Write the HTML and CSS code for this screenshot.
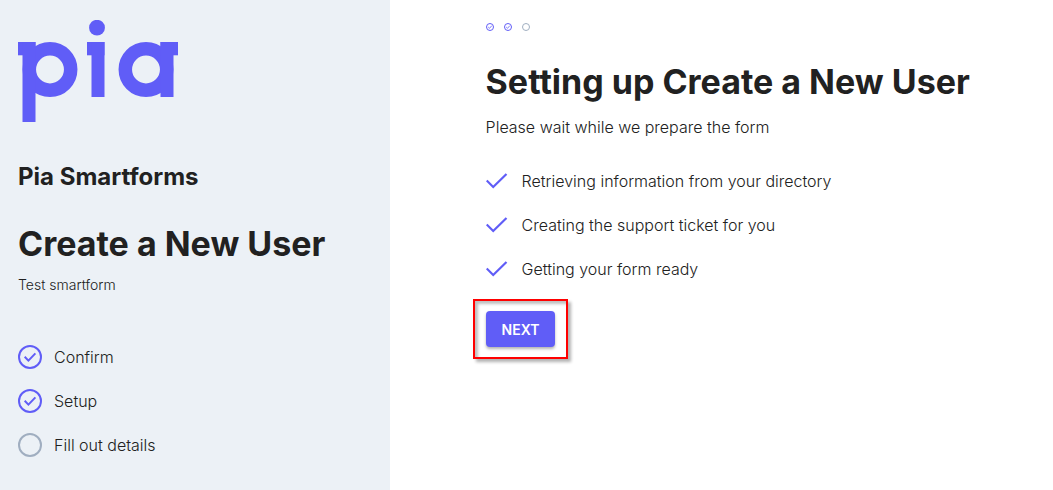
FILE: index.html
```html
<!DOCTYPE html>
<html lang="en">
<head>
    <meta charset="UTF-8">
    <meta name="viewport" content="width=device-width, initial-scale=1.0">
    <title>Pia Smartforms - Create a New User</title>
    <link rel="stylesheet" href="styles.css">
</head>
<body>
    <!-- Shared icons -->
    <svg class="sprite" aria-hidden="true">
        <symbol id="icon-done" viewBox="0 0 24 24">
            <circle cx="12" cy="12" r="11" fill="none" stroke="currentColor" stroke-width="2"/>
            <path d="M6.7 11.8l3.7 3.8 7-7.2" fill="none" stroke="currentColor" stroke-width="2"/>
        </symbol>
        <symbol id="icon-done-small" viewBox="0 0 8 8">
            <circle cx="4" cy="4" r="3.5" fill="none" stroke="currentColor"/>
            <path d="M2.200 4l1.300 1.300 2.300-2.600" fill="none" stroke="currentColor" stroke-width="0.8"/>
        </symbol>
        <symbol id="icon-todo" viewBox="0 0 24 24">
            <circle cx="12" cy="12" r="11" fill="none" stroke="currentColor" stroke-width="2"/>
        </symbol>
        <symbol id="icon-todo-small" viewBox="0 0 8 8">
            <circle cx="4" cy="4" r="3.5" fill="none" stroke="currentColor"/>
        </symbol>
        <symbol id="icon-check" viewBox="0 0 24 24">
            <path d="M.7 11.500l6.500 6.500L20.500 5" fill="none" stroke="currentColor" stroke-width="2.200"/>
        </symbol>
    </svg>

    <div class="layout">
        <aside class="sidebar">
            <svg class="logo" viewBox="0 0 160 102" role="img" aria-label="pia">
                <g fill="none" stroke="currentColor" stroke-width="13.500">
                    <circle cx="32" cy="49.500" r="20.700"/>
                    <circle cx="128" cy="49.500" r="20.700"/>
                </g>
                <g fill="currentColor">
                    <rect x="0" y="22" width="17.500" height="13.300"/>
                    <rect x="4.500" y="22" width="13" height="80"/>
                    <circle cx="79" cy="7.700" r="7.900"/>
                    <rect x="69" y="22" width="17.500" height="13.300"/>
                    <rect x="73.500" y="22" width="13" height="55"/>
                    <rect x="142.500" y="22" width="17.500" height="13.300"/>
                    <rect x="142.500" y="22" width="13" height="55"/>
                </g>
            </svg>
            <h2 class="product">Pia Smartforms</h2>
            <h1 class="title">Create a New User</h1>
            <p class="subtitle">Test smartform</p>
            <ol class="steps">
                <li class="step"><svg class="icon"><use href="#icon-done"/></svg>Confirm</li>
                <li class="step"><svg class="icon"><use href="#icon-done"/></svg>Setup</li>
                <li class="step"><svg class="icon todo"><use href="#icon-todo"/></svg>Fill out details</li>
            </ol>
        </aside>

        <main class="content">
            <div class="progress">
                <svg class="dot"><use href="#icon-done-small"/></svg>
                <svg class="dot"><use href="#icon-done-small"/></svg>
                <svg class="dot todo"><use href="#icon-todo-small"/></svg>
            </div>
            <h1 class="title">Setting up Create a New User</h1>
            <p class="intro">Please wait while we prepare the form</p>
            <ul class="tasks">
                <li class="step"><svg class="icon"><use href="#icon-check"/></svg>Retrieving information from your directory</li>
                <li class="step"><svg class="icon"><use href="#icon-check"/></svg>Creating the support ticket for you</li>
                <li class="step"><svg class="icon"><use href="#icon-check"/></svg>Getting your form ready</li>
            </ul>
            <div class="highlight">
                <button type="button" class="next">NEXT</button>
            </div>
        </main>
    </div>
</body>
</html>
```

FILE: styles.css
```css
* {
    margin: 0;
    padding: 0;
    box-sizing: border-box;
}

body {
    font-family: Inter, sans-serif;
    font-size: 16px;
    font-weight: 300;
    line-height: 24px;
    color: #212121;
    background: white;
}

.sprite {
    display: none;
}

.layout {
    display: grid;
    grid-template-columns: 37% 1fr;
    min-height: 100vh;
}

.sidebar {
    background: #ecf1f6;
    padding: 20px 18px;
}

.logo {
    display: block;
    width: 160px;
    color: #605df7;
}

.product {
    font-size: 24px;
    font-weight: 700;
    line-height: 32px;
    margin-top: 39px;
}

.title {
    font-size: 34px;
    font-weight: 700;
    line-height: 48px;
}

.sidebar .title {
    margin-top: 27px;
}

.subtitle {
    font-size: 14px;
    margin-top: 5px;
}

.steps,
.tasks {
    list-style: none;
    display: flex;
    flex-direction: column;
    gap: 20px;
}

.steps {
    margin-top: 48px;
}

.step {
    display: flex;
    align-items: center;
    gap: 12px;
}

.icon {
    flex: none;
    width: 24px;
    height: 24px;
    color: #605df7;
}

.content {
    padding: 22px 16px 20px 96px;
}

.progress {
    display: flex;
    gap: 10px;
    padding: 1px 0;
}

.dot {
    width: 8px;
    height: 8px;
    color: #605df7;
}

.icon.todo,
.dot.todo {
    color: #a0aec0;
}

.content .title {
    margin-top: 26px;
}

.intro {
    margin-top: 9px;
}

.tasks {
    margin-top: 30px;
}

.highlight {
    position: relative;
    width: fit-content;
    margin-top: 30px;
}

/* red frame around the button */
.highlight::after {
    content: '';
    position: absolute;
    inset: -12px -13px;
    border: 2px solid #f00;
    box-shadow: 3px 3px 3px rgba(0,0,0,0.3), inset 3px 3px 3px rgba(0,0,0,0.25);
    pointer-events: none;
}

.next {
    display: block;
    height: 36px;
    padding: 0 16px;
    border: none;
    border-radius: 4px;
    background: #605df7;
    color: white;
    font-family: inherit;
    font-size: 14px;
    font-weight: 600;
    cursor: pointer;
    box-shadow: 0 2px 3px rgba(0,0,0,0.3);
}

@media (max-width: 768px) {
    .layout {
        grid-template-columns: 1fr;
    }

    .content {
        padding: 24px 18px;
    }
}
```
